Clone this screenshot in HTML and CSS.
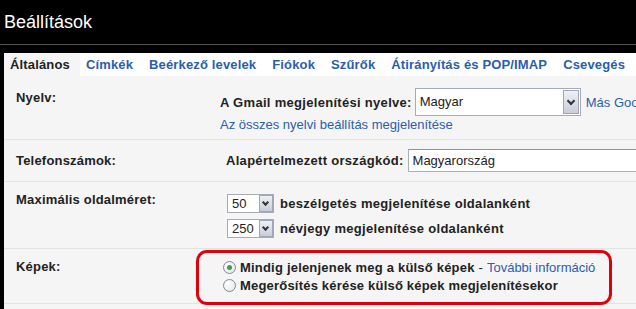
FILE: index.html
```html
<!DOCTYPE html>
<html lang="hu">
<head>
    <meta charset="UTF-8">
    <title>Beállítások</title>
    <link rel="stylesheet" href="styles.css">
</head>
<body>

    <h1 class="page-title">Beállítások</h1>

    <div class="panel">
        <div class="tabs">
            <span class="tab active">Általános</span>
            <a class="tab" href="#">Címkék</a>
            <a class="tab" href="#">Beérkező levelek</a>
            <a class="tab" href="#">Fiókok</a>
            <a class="tab" href="#">Szűrők</a>
            <a class="tab" href="#">Átirányítás és POP/IMAP</a>
            <a class="tab" href="#">Csevegés</a>
        </div>

        <div class="row row-lang">
            <div class="label">Nyelv:</div>
            <div class="value">
                <div class="line">
                    <b>A Gmail megjelenítési nyelve:</b>
                    <span class="select select-lang">Magyar<span class="arrow"></span></span>
                    <a href="#" class="more">Más Google-termékek nyelve</a>
                </div>
                <a href="#" class="sub-link">Az összes nyelvi beállítás megjelenítése</a>
            </div>
        </div>

        <div class="row row-phone">
            <div class="label">Telefonszámok:</div>
            <div class="value">
                <div class="line">
                    <b>Alapértelmezett országkód:</b>
                    <span class="input">Magyarország</span>
                </div>
            </div>
        </div>

        <div class="row row-size">
            <div class="label">Maximális oldalméret:</div>
            <div class="value">
                <div class="line">
                    <span class="select select-small">50<span class="arrow"></span></span>
                    <b>beszélgetés megjelenítése oldalanként</b>
                </div>
                <div class="line">
                    <span class="select select-small">250<span class="arrow"></span></span>
                    <b>névjegy megjelenítése oldalanként</b>
                </div>
            </div>
        </div>

        <div class="row row-images">
            <div class="label">Képek:</div>
            <div class="value">
                <div class="line">
                    <span class="radio checked"></span>
                    <b>Mindig jelenjenek meg a külső képek</b>
                    <span class="sep">-</span>
                    <a href="#">További információ</a>
                </div>
                <div class="line">
                    <span class="radio"></span>
                    <b>Megerősítés kérése külső képek megjelenítésekor</b>
                </div>
            </div>
            <div class="highlight"></div>
        </div>
    </div>

</body>
</html>
```

FILE: styles.css
```css
body {
    margin: 0;
    background-color: #000;
    font-family: 'Liberation Sans', Arial, sans-serif;
    font-size: 13px;
    color: #222;
    height: 309px;
    overflow: hidden;
}
a {
    color: #2a5db0;
    text-decoration: none;
}
b {
    letter-spacing: 0.3px;
}
.page-title {
    margin: 0 0 8px;
    height: 44px;
    line-height: 44px;
    padding-left: 4px;
    font-size: 18px;
    font-weight: normal;
    color: #fff;
    border-bottom: 1px solid #555;
}
.panel {
    margin-left: 4px;
    background-color: #f5f5f5;
    height: 256px;
    overflow: hidden;
}
.tabs {
    display: flex;
    background-color: #fff;
    height: 23px;
    line-height: 23px;
    white-space: nowrap;
    font-weight: bold;
    letter-spacing: 0.15px;
}
.tab {
    padding: 0 10px 0 6px;
    flex-shrink: 0;
}
.tab.active {
    background-color: #f5f5f5;
    color: #222;
}

.row {
    display: flex;
    position: relative;
    border-bottom: 1px solid #e3e3e3;
    white-space: nowrap;
}
.label {
    width: 204px;
    padding-left: 12px;
    flex-shrink: 0;
    font-weight: bold;
    line-height: 15px;
    letter-spacing: 0.2px;
}
.value {
    display: flex;
    flex-direction: column;
}
.line {
    display: flex;
    align-items: center;
}

.row-lang {
    padding: 12px 0 7px;
}
.row-lang .label {
    margin-top: 2px;
}
.row-lang .line {
    height: 28px;
}
.sub-link {
    margin-top: 1px;
    line-height: 15px;
}
.more {
    margin-left: 5px;
}

.row-phone {
    padding: 9px 0;
    align-items: center;
}
.row-phone .value {
    padding-left: 6px;
}

.row-size {
    padding: 11px 0 10px;
}
.row-size .label {
    margin-top: -1px;
}
.row-size .value {
    padding-left: 7px;
    gap: 6px;
}
.row-size .line:first-child {
    margin-top: 1px;
}

.row-images {
    padding: 9px 0 9px;
}
.row-images .label {
    margin-top: 1px;
}
.row-images .value {
    padding-left: 3px;
}
.row-images .line {
    height: 18px;
}
.row-images b {
    letter-spacing: 0.2px;
}
.sep {
    padding: 0 4px;
}

.select {
    position: relative;
    display: inline-block;
    background-color: #fff;
    border: 1px solid #a5acb5;
    box-sizing: border-box;
    font-weight: normal;
    color: #222;
}
.select .arrow {
    position: absolute;
    top: 1px;
    right: 1px;
    bottom: 1px;
    border: 1px solid #a0a6b8;
    background: linear-gradient(#eef0f6, #c9cdd9);
    box-sizing: border-box;
}
.select .arrow::after {
    content: "";
    position: absolute;
    left: 50%;
    top: 50%;
    width: 4px;
    height: 4px;
    margin: -4px 0 0 -3px;
    border-right: 2px solid #333;
    border-bottom: 2px solid #333;
    transform: rotate(45deg);
}
.select-lang {
    width: 166px;
    height: 28px;
    line-height: 26px;
    padding-left: 4px;
    margin-left: 3px;
}
.select-lang .arrow {
    width: 16px;
}
.select-small {
    width: 47px;
    height: 19px;
    line-height: 17px;
    padding-left: 4px;
    margin-right: 6px;
}
.select-small .arrow {
    width: 14px;
    top: 0;
    right: 0;
    bottom: 0;
}
.select-small .arrow::after {
    width: 3px;
    height: 3px;
}

.input {
    display: inline-block;
    width: 232px;
    height: 23px;
    line-height: 21px;
    box-sizing: border-box;
    margin-left: 4px;
    padding-left: 4px;
    background-color: #fff;
    border: 1px solid #aab0ba;
    border-top-color: #8d939d;
}

.radio {
    display: inline-block;
    width: 13px;
    height: 13px;
    box-sizing: border-box;
    border: 1px solid #7f8a96;
    border-radius: 50%;
    background: radial-gradient(circle at 35% 35%, #fff, #dfe3e8);
    margin-right: 4px;
    position: relative;
}
.radio.checked::after {
    content: "";
    position: absolute;
    left: 3px;
    top: 3px;
    width: 5px;
    height: 5px;
    border-radius: 50%;
    background-color: #3aa33a;
}

.highlight {
    position: absolute;
    left: 192px;
    top: 1px;
    width: 416px;
    height: 55px;
    box-sizing: border-box;
    border: 3px solid #e0000b;
    border-radius: 11px;
}
```
